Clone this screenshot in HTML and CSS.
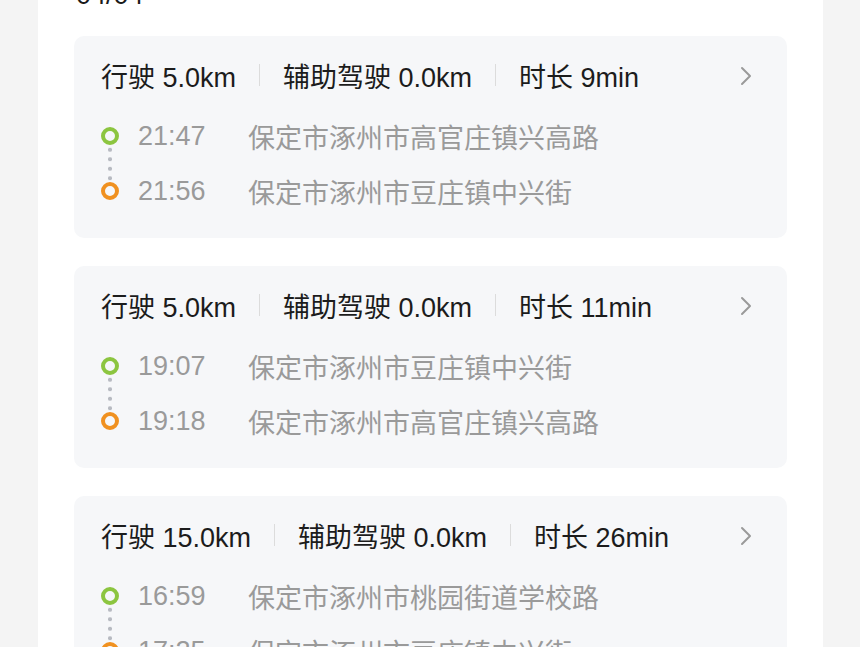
FILE: index.html
```html
<!DOCTYPE html>
<html lang="zh-CN">
<head>
  <meta charset="UTF-8">
  <title>行程记录</title>
  <meta name="viewport" content="width=device-width, initial-scale=1.0">
  <link rel="stylesheet" href="styles.css">
</head>
<body>

<div class="panel">
  <div class="date">04/04</div>

  <!-- Trip 1 -->
  <div class="trip">
    <div class="trip-head">
      <span>行驶 5.0km</span>
      <i class="sep"></i>
      <span>辅助驾驶 0.0km</span>
      <i class="sep"></i>
      <span>时长 9min</span>
      <svg class="arrow" width="14" height="20" viewBox="0 0 14 20"><polyline points="3,2 11,10 3,18" fill="none" stroke="#9a9a9a" stroke-width="2" stroke-linecap="round" stroke-linejoin="round"/></svg>
    </div>
    <div class="route">
      <div class="track">
        <span class="dot start"></span>
        <span class="dots"></span>
        <span class="dot end"></span>
      </div>
      <div class="stops">
        <div class="stop"><span class="time">21:47</span><span class="place">保定市涿州市高官庄镇兴高路</span></div>
        <div class="stop"><span class="time">21:56</span><span class="place">保定市涿州市豆庄镇中兴街</span></div>
      </div>
    </div>
  </div>

  <!-- Trip 2 -->
  <div class="trip">
    <div class="trip-head">
      <span>行驶 5.0km</span>
      <i class="sep"></i>
      <span>辅助驾驶 0.0km</span>
      <i class="sep"></i>
      <span>时长 11min</span>
      <svg class="arrow" width="14" height="20" viewBox="0 0 14 20"><polyline points="3,2 11,10 3,18" fill="none" stroke="#9a9a9a" stroke-width="2" stroke-linecap="round" stroke-linejoin="round"/></svg>
    </div>
    <div class="route">
      <div class="track">
        <span class="dot start"></span>
        <span class="dots"></span>
        <span class="dot end"></span>
      </div>
      <div class="stops">
        <div class="stop"><span class="time">19:07</span><span class="place">保定市涿州市豆庄镇中兴街</span></div>
        <div class="stop"><span class="time">19:18</span><span class="place">保定市涿州市高官庄镇兴高路</span></div>
      </div>
    </div>
  </div>

  <!-- Trip 3 -->
  <div class="trip">
    <div class="trip-head">
      <span>行驶 15.0km</span>
      <i class="sep"></i>
      <span>辅助驾驶 0.0km</span>
      <i class="sep"></i>
      <span>时长 26min</span>
      <svg class="arrow" width="14" height="20" viewBox="0 0 14 20"><polyline points="3,2 11,10 3,18" fill="none" stroke="#9a9a9a" stroke-width="2" stroke-linecap="round" stroke-linejoin="round"/></svg>
    </div>
    <div class="route">
      <div class="track">
        <span class="dot start"></span>
        <span class="dots"></span>
        <span class="dot end"></span>
      </div>
      <div class="stops">
        <div class="stop"><span class="time">16:59</span><span class="place">保定市涿州市桃园街道学校路</span></div>
        <div class="stop"><span class="time">17:25</span><span class="place">保定市涿州市豆庄镇中兴街</span></div>
      </div>
    </div>
  </div>
</div>

</body>
</html>
```

FILE: styles.css
```css
* { margin: 0; padding: 0; box-sizing: border-box; }
html, body {
  width: 100%;
  height: 100%;
  overflow: hidden;
  font-family: "Liberation Sans", "Noto Sans CJK SC", sans-serif;
  background: #f4f4f4;
}
.panel {
  margin: 0 37px 0 38px;
  height: calc(100% + 40px);
  background: #fff;
  padding: 0 36px;
}
.date {
  font-size: 27px;
  line-height: 30px;
  color: #1a1a1a;
  margin-top: -20px;
  margin-bottom: 26px;
  padding-left: 2px;
}
.trip {
  height: 202px;
  margin-bottom: 28px;
  padding: 24px 34px 0 27px;
  background: #f6f7f9;
  border-radius: 10px;
}
.trip-head {
  display: flex;
  align-items: center;
  height: 30px;
  font-size: 27px;
  color: #1c1c1c;
  white-space: nowrap;
}
.sep {
  width: 1px;
  height: 22px;
  margin: 0 23px;
  background: #dcdcdc;
}
.arrow {
  margin-left: auto;
  margin-top: 2px;
}
.route {
  display: flex;
  margin-top: 31px;
}
.track {
  display: flex;
  flex-direction: column;
  align-items: center;
  width: 18px;
  padding-top: 6px;
}
.dot {
  width: 18px;
  height: 18px;
  border-radius: 50%;
  border: 4px solid #8cc540;
}
.dot.end {
  border-color: #f09120;
}
.dots {
  width: 4px;
  height: 37px;
  background-image: radial-gradient(circle, #b7bac1 1.8px, transparent 2.3px);
  background-size: 4px 9.5px;
}
.stops {
  display: flex;
  flex-direction: column;
  gap: 25px;
  margin-left: 19px;
}
.stop {
  display: flex;
  height: 30px;
  align-items: center;
  font-size: 27px;
  color: #9a9a9a;
  white-space: nowrap;
}
.time {
  width: 110px;
}
```
